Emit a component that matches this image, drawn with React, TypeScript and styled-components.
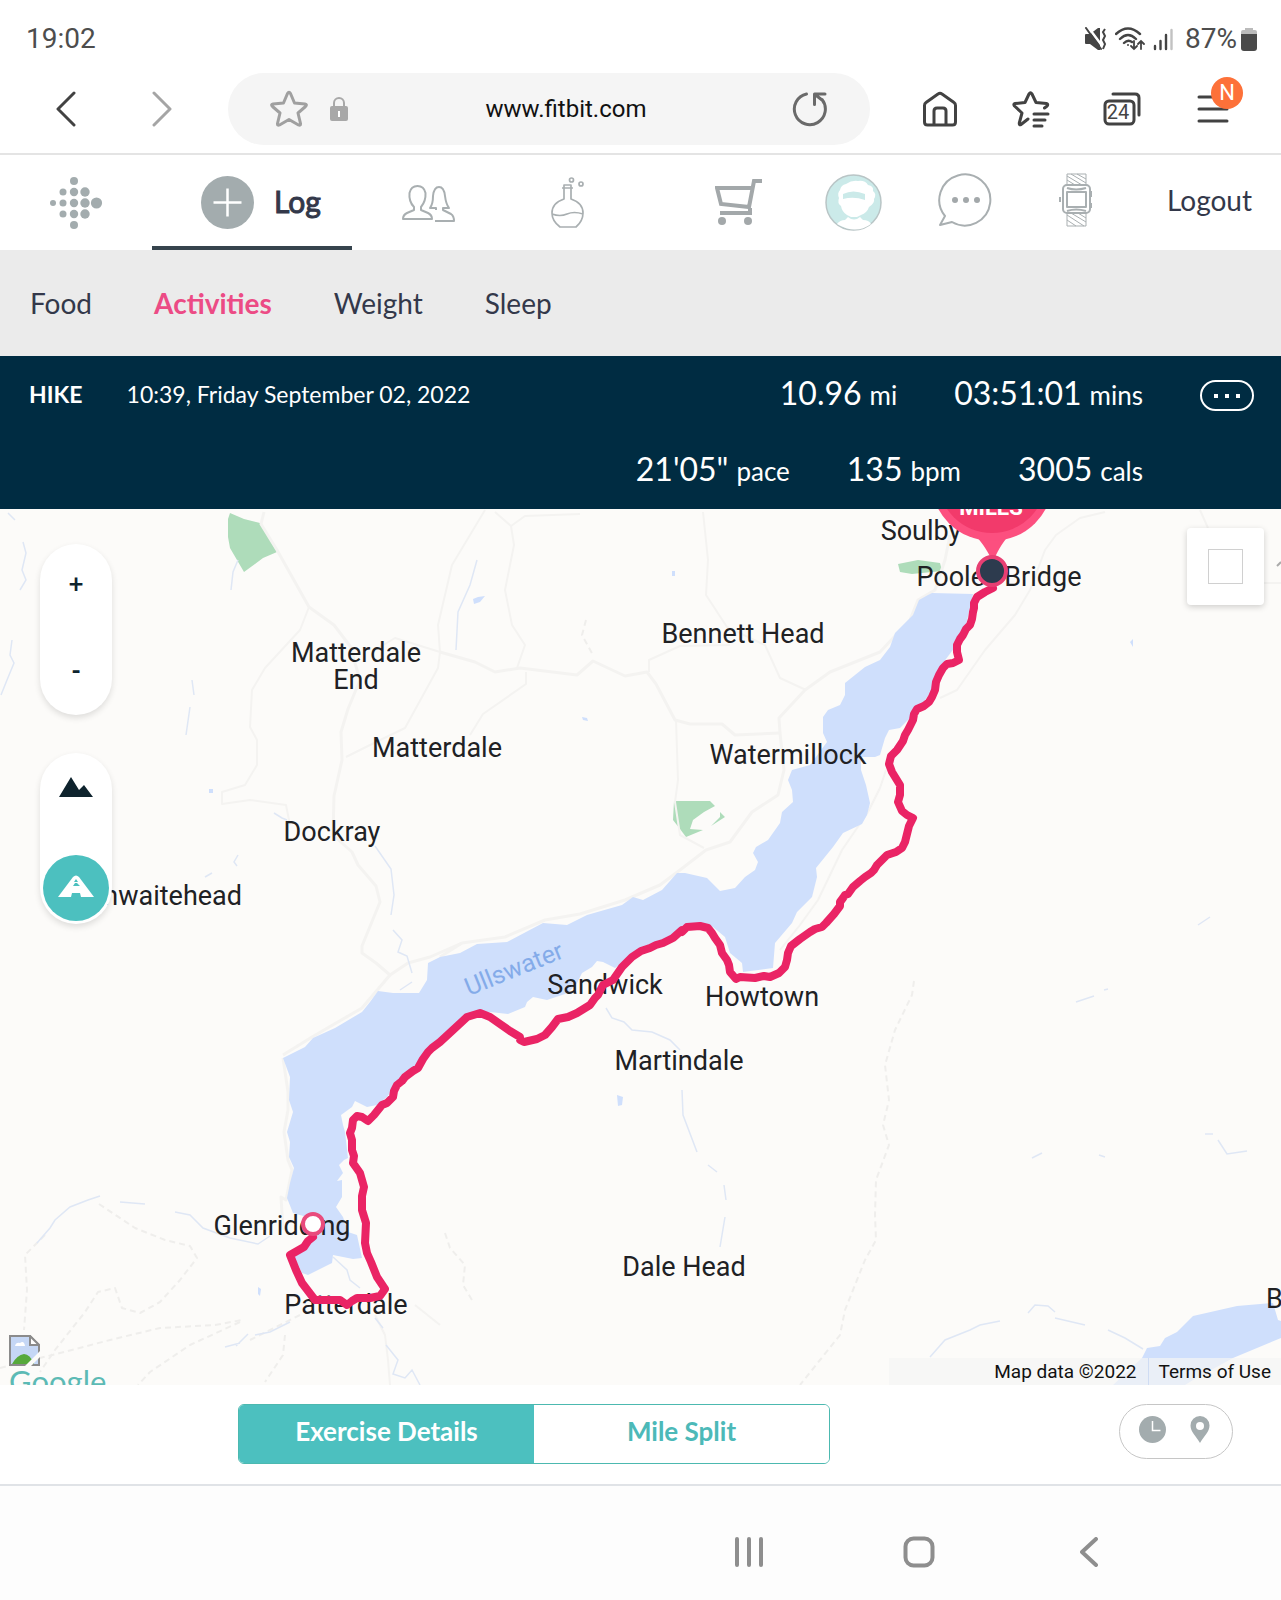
import React from "react";
import styled, { createGlobalStyle, css } from "styled-components";

const GlobalStyle = createGlobalStyle`
  *, *::before, *::after { box-sizing: border-box; }
  body { margin: 0; background: #fff; font-family: Lato, "Liberation Sans", sans-serif; color: #33384a; }
  button { border: 0; padding: 0; background: none; font: inherit; color: inherit; cursor: pointer; }
  a { color: inherit; text-decoration: none; }
  svg { display: block; flex: none; }
`;

const roboto = css`font-family: Roboto, "Liberation Sans", sans-serif;`;

const Page = styled.div`
  display: flex;
  flex-direction: column;
  min-height: 100vh;
  background: #fdfdfd;
`;

const StatusBar = styled.div`
  ${roboto}
  display: flex;
  align-items: center;
  justify-content: space-between;
  height: 65px;
  padding: 12px 24px 0 26px;
  font-size: 28px;
  line-height: 32px;
  color: #4d4d4d;
  background: #fff;
`;

const StatusIcons = styled.div`
  display: flex;
  align-items: center;
  gap: 8px;
`;

const Battery = styled.span`
  display: flex;
  align-items: center;
  gap: 4px;
  padding-left: 4px;
`;

const Toolbar = styled.div`
  display: flex;
  align-items: center;
  height: 90px;
  padding: 0 23px 0 18px;
  background: #fff;
  border-bottom: 2px solid #e4e4e4;
`;

const ToolButton = styled.button<{ $w: number }>`
  position: relative;
  display: flex;
  flex: none;
  align-items: center;
  justify-content: center;
  width: ${(p) => p.$w}px;
  height: 72px;
`;

const AddressBar = styled.div`
  display: flex;
  flex: 1;
  align-items: center;
  min-width: 0;
  height: 72px;
  margin: 0 24px 0 18px;
  padding: 0 42px;
  gap: 22px;
  border-radius: 36px;
  background: #f5f5f5;
`;

const Address = styled.input`
  ${roboto}
  flex: 1;
  min-width: 0;
  padding: 0 8px 0 0;
  border: 0;
  outline: 0;
  background: none;
  text-align: center;
  font-size: 24px;
  line-height: 32px;
  color: #111;
`;

const TabCount = styled.span`
  ${roboto}
  position: absolute;
  top: 29px;
  left: 26px;
  width: 32px;
  text-align: center;
  font-size: 20px;
  line-height: 20px;
  color: #444;
`;

const Badge = styled.span`
  ${roboto}
  position: absolute;
  top: 4px;
  left: 44px;
  width: 32px;
  height: 32px;
  border-radius: 50%;
  background: #fd7139;
  color: #fff;
  text-align: center;
  font-size: 22px;
  line-height: 32px;
`;

const MainNav = styled.nav`
  display: flex;
  height: 95px;
  background: #fff;
`;

const NavCell = styled.a<{ $w: number; $push?: boolean }>`
  display: flex;
  flex: none;
  align-items: center;
  justify-content: center;
  width: ${(p) => p.$w}px;
  height: 95px;
  ${(p) => p.$push && "margin-left: auto;"}
`;

const LogTab = styled(NavCell)`
  justify-content: flex-start;
  gap: 20px;
  padding: 4px 0 0 49px;
  border-bottom: 4px solid #36444d;
  font-size: 30px;
  line-height: 36px;
  color: #33384a;
  span { padding-bottom: 4px; -webkit-text-stroke: 1px #33384a; }
`;

const Logout = styled.a`
  flex: none;
  padding: 27px 29px 0 33px;
  font-size: 28px;
  line-height: 36px;
`;

const SubNav = styled.nav`
  display: flex;
  align-items: center;
  gap: 62px;
  height: 106px;
  padding: 0 30px;
  background: #ebebeb;
  font-size: 28px;
  line-height: 36px;
`;

const SubLink = styled.a<{ $active?: boolean }>`
  ${(p) => p.$active && "color: #ec4b85; font-weight: 700;"}
`;

const Summary = styled.header`
  display: flex;
  justify-content: space-between;
  padding: 0 27px 1px 29px;
  background: #002c42;
  color: #fff;
`;

const SummaryTitle = styled.div`
  display: flex;
  align-items: center;
  height: 76px;
  gap: 44px;
  font-size: 23px;
  line-height: 28px;
`;

const Kind = styled.h1`
  margin: 0;
  font-size: 23px;
  font-weight: 700;
`;

const SummaryEnd = styled.div`
  display: flex;
  gap: 57px;
`;

const StatRow = styled.div`
  display: flex;
  align-items: center;
  justify-content: flex-end;
  gap: 57px;
  height: 76px;
`;

const Stat = styled.span`
  display: flex;
  align-items: baseline;
  gap: 8px;
  font-size: 32px;
  line-height: 40px;
  small { font-size: 26px; }
`;

const MoreButton = styled.button`
  width: 54px;
  height: 31px;
  margin-top: 24px;
  border: 2px solid #fff;
  border-radius: 16px;
  display: flex;
  align-items: center;
  justify-content: center;
  gap: 7px;
  i { width: 4px; height: 4px; background: #fff; }
`;

const MapArea = styled.section`
  position: relative;
  overflow: hidden;
  background: #fcfbf9;
`;

const MapCanvas = styled.svg`
  width: 100%;
  height: auto;
  text { font-family: Roboto, "Liberation Sans", sans-serif; }
`;

const MapControls = styled.div`
  position: absolute;
  top: 35px;
  left: 40px;
  display: flex;
  flex-direction: column;
  gap: 38px;
`;

const Pill = styled.div`
  display: flex;
  flex-direction: column;
  align-items: center;
  justify-content: space-between;
  width: 72px;
  height: 171px;
  padding: 3px;
  border-radius: 36px;
  background: #fff;
  box-shadow: 0 3px 6px rgba(0, 0, 0, 0.12);
`;

const ZoomPill = styled(Pill)`
  padding: 0 3px 6px;
`;

const PillButton = styled.button<{ $active?: boolean }>`
  display: flex;
  align-items: center;
  justify-content: center;
  width: 66px;
  height: 66px;
  padding-bottom: 4px;
  border-radius: 50%;
  color: #0e232d;
  ${(p) => p.$active && "background: #4cc0bf;"}
`;

const ZoomButton = styled(PillButton)`
  height: 78px;
  padding: 0;
  font-size: 26px;
  font-weight: 700;
  line-height: 32px;
`;

const FullScreen = styled.label`
  position: absolute;
  top: 19px;
  right: 17px;
  display: flex;
  align-items: center;
  justify-content: center;
  width: 77px;
  height: 77px;
  border-radius: 4px;
  background: #fff;
  box-shadow: 0 2px 6px rgba(0, 0, 0, 0.18);
  input {
    appearance: none;
    width: 35px;
    height: 35px;
    margin: 0;
    border: 1px solid #d0d0d0;
    background: #fff;
  }
`;

const GoogleLink = styled.a`
  position: absolute;
  left: 9px;
  bottom: -11px;
  color: #5cbab5;
  font-size: 31px;
  line-height: 30px;
`;

const Attribution = styled.div`
  ${roboto}
  position: absolute;
  right: 0;
  bottom: 0;
  display: flex;
  height: 27px;
  font-size: 19px;
  line-height: 27px;
  color: #111;
  > * { background: rgba(245, 245, 245, 0.7); }
`;

const AttributionGap = styled.span`
  width: 94px;
`;

const MapData = styled.span`
  padding: 0 11px;
  border-right: 1px solid #cfdcf3;
`;

const Terms = styled.a`
  padding: 0 10px;
`;

const DetailBar = styled.div`
  display: flex;
  align-items: flex-start;
  justify-content: space-between;
  height: 101px;
  padding: 19px 48px 0 238px;
  border-bottom: 2px solid #e0e3e7;
  background: #fff;
`;

const Segments = styled.div`
  display: flex;
  width: 592px;
  height: 60px;
  overflow: hidden;
  border: 1px solid #4cb9b0;
  border-radius: 6px;
`;

const Segment = styled.button<{ $active?: boolean }>`
  flex: 1;
  padding-bottom: 6px;
  font-size: 26px;
  line-height: 32px;
  font-weight: 700;
  color: ${(p) => (p.$active ? "#fff" : "#4cb9b8")};
  background: ${(p) => (p.$active ? "#4cc0bf" : "#fff")};
`;

const AxisToggle = styled.div`
  display: flex;
  align-items: center;
  justify-content: center;
  width: 114px;
  height: 55px;
  padding-bottom: 4px;
  border: 1px solid #c6c6c6;
  border-radius: 28px;
  gap: 20px;
`;

const SystemNav = styled.div`
  display: flex;
  flex: 1;
  align-items: center;
  justify-content: flex-end;
  min-height: 114px;
  padding: 18px 107px 0 0;
`;

const places: [string, number, number][] = [
  ["Bennett Head", 743, 643],
  ["Matterdale", 356, 662],
  ["End", 356, 689],
  ["Matterdale", 437, 757],
  ["Dockray", 332, 841],
  ["Watermillock", 788, 764],
  ["Soulby", 921, 540],
  ["Pooley Bridge", 999, 586],
  ["Sandwick", 605, 994],
  ["Howtown", 762, 1006],
  ["Martindale", 679, 1070],
  ["Dale Head", 684, 1276],
  ["Glenridding", 282, 1235],
  ["Patterdale", 346, 1314],
];

const ullswater =
  "932,593 973,594 966,625 955,647 940,667 934,687 923,703 915,713 908,720 900,728 889,730 885,738 880,755 875,757 861,757 861,770 866,785 870,803 867,815 862,824 843,833 833,847 816,868 817,877 812,897 797,912 792,923 775,943 773,968 743,972 742,963 730,953 725,937 713,927 700,923 680,930 653,947 630,957 615,968 603,962 597,961 592,967 582,973 577,983 568,993 547,1000 533,997 527,1002 525,1007 508,1014 490,1012 480,1013 463,1020 440,1042 417,1067 397,1083 387,1097 377,1105 367,1107 355,1101 352,1107 341,1115 343,1125 345,1132 348,1158 344,1160 339,1165 343,1173 337,1181 342,1180 342,1197 336,1207 343,1217 348,1232 357,1235 362,1258 353,1259 333,1255 332,1263 308,1275 302,1273 293,1255 312,1237 307,1217 293,1213 287,1198 290,1183 294,1168 289,1157 290,1142 287,1132 293,1112 289,1100 290,1077 283,1058 305,1047 313,1038 335,1028 362,1012 370,1002 378,991 393,993 419,993 427,980 428,963 440,957 460,953 477,944 507,942 543,923 567,925 587,915 622,905 633,897 643,900 662,890 677,873 685,873 707,878 720,891 735,888 745,877 755,870 758,862 753,853 756,847 768,840 780,823 782,812 793,802 792,790 788,780 792,770 810,765 827,742 823,733 823,717 828,710 840,705 845,695 845,683 865,667 880,660 890,647 895,633 913,615 919,600 928,595";

const route =
  "993,588 985,592 977,597 974,603 974,608 973,612 972,619 970,625 966,629 963,635 960,639 957,645 957,652 959,660 953,663 947,664 943,668 939,675 936,682 935,690 932,697 929,702 924,706 917,709 914,714 913,720 908,730 905,735 903,741 897,750 891,756 889,764 892,772 900,785 900,795 898,802 902,811 907,815 913,818 909,826 907,834 905,842 902,848 896,852 887,855 877,865 874,870 871,873 865,877 860,881 853,887 848,894 845,895 843,898 840,902 840,906 834,914 826,923 822,927 815,929 810,932 800,939 791,946 788,953 787,960 785,967 779,973 770,977 764,976 755,978 740,977 736,979 730,972 729,965 727,960 722,953 720,945 715,938 712,933 708,928 700,926 687,927 682,932 682,930 673,938 663,943 656,945 650,948 641,951 632,957 622,967 613,980 603,985 598,995 595,998 590,1005 577,1013 568,1017 558,1019 552,1027 545,1035 537,1039 524,1042 520,1040 520,1037 510,1031 500,1024 490,1017 480,1013 467,1017 453,1030 440,1042 432,1048 428,1052 423,1059 418,1068 413,1071 405,1077 402,1081 397,1085 394,1091 393,1097 387,1103 382,1105 374,1115 368,1121 362,1117 357,1116 353,1120 352,1128 350,1133 352,1140 352,1150 354,1156 353,1163 360,1173 362,1180 364,1187 362,1196 362,1210 366,1223 365,1243 367,1253 371,1262 375,1272 377,1277 385,1289 380,1296 370,1298 357,1298 352,1301 347,1305 340,1300 315,1300 302,1283 296,1270 290,1255 304,1247 308,1241 313,1237";

const roads = [
  "M264 512L261 524 277 550 309 607 334 625 350 646 360 680 348 709 341 732 342 760 334 796 333 835 352 852 358 865 376 886 380 902 362 946 362 953 376 963 390 975 408 963 430 957 462 943 505 937 545 920 580 914 625 900 660 885 680 870 706 850 730 842 752 812 778 795 784 770 780 733 779 718 805 690 830 672 880 652 910 620 918 600 935 590 945 560 950 535",
  "M440 957L462 943M283 1055L312 1037 362 1008 390 975M283 1058L288 1092 288 1110 284 1132 288 1160 292 1170 286 1200 281 1197 283 1230",
  "M440 652L475 662 495 672 520 668 577 675 593 661 625 676 647 672 656 684 675 720 690 724 722 724 735 735 780 733",
];
const lanes = [
  "M440 652L438 668 405 728 370 745 346 757M485 510L452 565 438 625 440 652 395 638 375 650M495 512L511 526 514 545 505 590 512 625 525 645 517 668",
  "M511 526L525 516 580 514M703 512L708 560 706 595 727 627 765 645 780 678 806 690M649 672L649 660 680 646 730 645",
  "M526 672L526 684 483 714 470 735M676 720L678 780 675 802 680 835 704 848",
  "M309 607L300 630 265 668 252 690 250 727 257 740 257 765 245 785 222 792 222 804 250 800 286 805 290 825",
  "M1105 512L1080 518 1056 535 1045 550 1030 590 1015 615 985 650 957 690 940 698M1200 510L1208 528M1264 583L1281 583",
  "M886 770L880 788 868 812 842 850 818 900 800 925 780 950",
  "M375 1315L385 1335 388 1360 390 1385M415 1305L440 1325",
];
const trails = [
  "M99 1204L135 1228 165 1240 190 1246 197 1258 180 1280 160 1302 140 1313 122 1308 115 1288 98 1292 85 1312 55 1350 40 1372",
  "M45 1235L25 1255 27 1290 24 1330M0 1368L60 1353 110 1340 160 1328 215 1325 242 1320",
  "M240 1322L190 1345 150 1372 138 1385M285 1335L283 1355 265 1382M300 1315L250 1340",
  "M914 981L912 995 895 1030 885 1065 889 1100 883 1125 889 1145 876 1180 875 1215 876 1240 865 1260 845 1310 840 1335 800 1385",
  "M445 1233L450 1248 465 1265 463 1285 472 1300M586 620L582 635 593 655",
];
const streams =
  "M100 1196L88 1200 70 1207 55 1220 50 1228 37 1243M120 1202L145 1204M175 1212L190 1215 203 1228 230 1238 258 1244 270 1236M23 542L26 553 22 570 26 580 20 590M12 640L10 655 14 663 7 680 1 695M8 513L15 520M192 680L194 695M190 707L186 735M238 560L233 572 231 590M375 846L391 869 394 895 391 915M393 930L402 940 398 952 407 956 412 973M412 982L400 990M333 1257L347 1270 350 1280 360 1288M236 1346L248 1334M255 1335L270 1332 290 1322M225 1347L240 1343M375 1318L383 1328M386 1345L398 1360 393 1374 405 1378 412 1370 420 1385M477 560L470 585 458 612 456 650M606 1008L612 1018 624 1022 632 1030 652 1032 670 1040 680 1050M682 1090L683 1115 697 1152M708 1165L717 1172M724 1185L726 1200M725 1217L720 1247M1198 925L1210 917M1032 1158L1042 1153M1099 1155L1105 1157M1205 1134L1213 1134M1218 1140L1227 1154 1247 1151M1076 1002L1094 996M1104 990L1108 989M930 1357L945 1340 970 1330 980 1325 1000 1321M1028 1313L1035 1305 1048 1306 1055 1312M1055 1318L1085 1325M1108 1330L1125 1338 1143 1349M274 813L282 818 287 820M238 855L234 862 237 866M205 877L212 873";

function LakeMap() {
  return (
    <MapCanvas viewBox="0 509 1281 876" role="img" aria-label="Route map of the hike around Ullswater">
      <rect y="509" width="1281" height="876" fill="#fcfbf9" />
      <g fill="#aedcba">
        <path d="M230 513L244 519 260 523 277 552 263 558 244 572 230 548 228 537 228 519z" />
        <path d="M674 801H710L715 806 704 812 693 820 690 829 703 830 686 837 680 829 673 820z" />
        <path d="M720 812L725 817 711 826 720 817z" />
        <path d="M898 564L918 560 940 563 942 571 912 574 900 572z" />
      </g>
      <g fill="none" stroke="#f4f3f1" strokeLinejoin="round">
        {roads.map((d) => <path key={d} d={d} strokeWidth="3" />)}
        {lanes.map((d) => <path key={d} d={d} strokeWidth="2" />)}
        {trails.map((d) => <path key={d} d={d} strokeWidth="2" strokeDasharray="6 4" stroke="#efeeec" />)}
      </g>
      <path d={streams} fill="none" stroke="#dfe7f5" strokeWidth="1.5" />
      <g fill="#cfdffc">
        <polygon points={ullswater} />
        <path d="M1113 1385L1142 1358 1147 1348 1160 1346 1165 1338 1177 1332 1193 1316 1237 1306 1273 1303 1278 1320 1281 1321V1338L1233 1358 1193 1380 1185 1385z" />
        <path d="M473 599L478 597 485 596 480 602 474 604zM672 571h3v5h-3zM582 717l5 1 1 3-5-1zM617 1095l6 2-1 8-4 1zM1130 642l3-3v8zM258 1287l3 2-1 7-2-2zM209 789h4v4h-4z" />
      </g>
      <g fontSize="27" textAnchor="middle" fill="#202124">
        {places.map(([name, x, y]) => <text key={name + x} x={x} y={y}>{name}</text>)}
        <text x="242" y="905" textAnchor="end">Thwaitehead</text>
        <text x="1266" y="1308" textAnchor="start">B</text>
      </g>
      <text x="469" y="996" fontSize="25" fill="#84abe9" transform="rotate(-22 469 996)">Ullswater</text>
      <polyline points={route} fill="none" stroke="#ea2465" strokeWidth="8" strokeLinejoin="round" strokeLinecap="round" />
      <circle cx="313" cy="1224" r="10" fill="#fff" stroke="#e94b7d" strokeWidth="4" />
      <path d="M975 535H1009C1001 545 997 552 993 562C988 552 984 545 975 535z" fill="#fc4f7f" />
      <circle cx="992" cy="480" r="61" fill="#fc4f7f" />
      <circle cx="992" cy="479" r="54" fill="#f23a6b" />
      <text x="991" y="515" fontSize="22" fontWeight="700" textAnchor="middle" fill="#fff">MILES</text>
      <circle cx="992" cy="571" r="14" fill="#2d3b4e" stroke="#e83f73" strokeWidth="4" />
      <path d="M1277 566L1281 562" stroke="#aaa" strokeWidth="2" />
    </MapCanvas>
  );
}

const stroke = { fill: "none", stroke: "#424242", strokeWidth: 3, strokeLinecap: "round", strokeLinejoin: "round" } as const;
const pale = { fill: "none", stroke: "#a9afb1", strokeWidth: 2, strokeLinejoin: "round" } as const;

const logoDots: [number, number, number][] = [
  [3, 26, 3], [13, 15, 3.5], [13, 26, 3.5], [13, 37, 3.5],
  [24, 4, 4], [24, 15, 4.2], [24, 26, 4.2], [24, 37, 4.2], [24, 48, 4],
  [35, 15, 4.7], [35, 26, 4.7], [35, 37, 4.7], [46.5, 26, 5.6],
];

export default function App() {
  return (
    <Page>
      <GlobalStyle />
      <StatusBar>
        <span>19:02</span>
        <StatusIcons>
          <svg width="23" height="24" viewBox="0 0 23 24">
            <path d="M1 8q0-1 1-1h4l8-6h2v22h-2l-8-6H2q-1 0-1-1z" fill="#444" />
            <path d="M4 0l15 20" stroke="#fff" strokeWidth="2.500" />
            <path d="M2 1l15 21" stroke="#444" strokeWidth="2" strokeLinecap="round" />
            <path d="M21 2l-2 3 2 4-2 4 2 4-2 5" fill="none" stroke="#444" strokeWidth="2" />
          </svg>
          <svg width="30" height="24" viewBox="0 0 30 24" fill="none" stroke="#444" strokeWidth="2.4" strokeLinecap="round">
            <path d="M1 7Q13-4 25 7M5 12Q13 4 21 12M9 16Q13 12 17 15" />
            <circle cx="13" cy="18" r="1" fill="#444" stroke="none" />
            <path d="M19 14v8m-3-3l3 3 3-3M26 22v-8m-3 3l3-3 3 3" strokeWidth="1.8" />
          </svg>
          <svg width="20" height="24" viewBox="0 0 20 24" stroke="#444" strokeWidth="2.4" strokeLinecap="round">
            <path d="M2 19v3M7.500 14v8M13 8v14" />
            <path d="M18.500 3v19" stroke="#c2c2c2" />
          </svg>
          <Battery>
            87%
            <svg width="16" height="24" viewBox="0 0 16 24">
              <path d="M4 1h8v2h2q2 0 2 2v3H0V5q0-2 2-2h2z" fill="#bbb" />
              <path d="M0 7h16v14q0 3-3 3H3q-3 0-3-3z" fill="#4a4a4a" />
            </svg>
          </Battery>
        </StatusIcons>
      </StatusBar>

      <Toolbar>
        <ToolButton $w={96} aria-label="Back">
          <svg width="20" height="36" viewBox="0 0 20 36" {...stroke}><path d="M18 2L2 18l16 16" /></svg>
        </ToolButton>
        <ToolButton $w={96} aria-label="Forward">
          <svg width="20" height="36" viewBox="0 0 20 36" {...stroke} stroke="#a5a5a5"><path d="M2 2l16 16L2 34" /></svg>
        </ToolButton>
        <AddressBar>
          <svg width="38" height="38" viewBox="0 0 38 38" {...stroke} stroke="#a0a0a0">
            <path d="M17.500 3.500q1.500-2.500 3 0l4 9.500 10.500 1q2.500.5.5 2.500L28 23l2.500 10.500q.2 2.500-2 1.500L19 29.500 9.500 35q-2.200 1-2-1.500L10 23 2.500 16.500q-2-2 .5-2.500l10.500-1z" />
          </svg>
          <svg width="18" height="24" viewBox="0 0 18 24">
            <path d="M4 10V6a5 5 0 0 1 10 0v4" fill="none" stroke="#a8a8a8" strokeWidth="2" />
            <rect y="9" width="18" height="15" rx="2" fill="#a8a8a8" />
            <path d="M8 14h2v6H8z" fill="#fff" />
          </svg>
          <Address aria-label="Address" defaultValue="www.fitbit.com" />
          <svg width="36" height="36" viewBox="0 0 36 36" {...stroke} stroke="#6a6a6a">
            <path d="M14.500 3A15.500 15.500 0 1 0 30 8.500M33 3H22.500v10.500M23 3.500L30 9" />
          </svg>
        </AddressBar>
        <ToolButton $w={91} aria-label="Home">
          <svg width="36" height="36" viewBox="0 0 36 36" {...stroke}>
            <path d="M2.500 14.500q0-2 1.500-3L16 3q2-1.500 4 0l12 8.500q1.500 1 1.500 3V31q0 3-3 3h-25q-3 0-3-3zM12 33V20q0-3 3-3h6q3 0 3 3v13" />
          </svg>
        </ToolButton>
        <ToolButton $w={91} aria-label="Bookmarks">
          <svg width="38" height="38" viewBox="0 0 38 38" {...stroke}>
            <path d="M16 29l-7 5.500q-2 .8-1.700-1.500L10 23 2.500 16q-1.500-2 .5-2.500l10-1L17 4q1.500-2.500 3 0l4 8.500 10.500 1q2.500.8 0 3l-2 1.500M22 24h14M22 30h11M22 36h8" />
          </svg>
        </ToolButton>
        <ToolButton $w={91} aria-label="Tabs">
          <svg width="38" height="34" viewBox="0 0 38 34" {...stroke}>
            <rect x="2" y="9" width="29" height="23" rx="4" />
            <path d="M10 2h22q4 0 4 4v17" />
          </svg>
          <TabCount>24</TabCount>
        </ToolButton>
        <ToolButton $w={91} aria-label="Menu">
          <svg width="32" height="28" viewBox="0 0 32 28" {...stroke}><path d="M2 2h28M2 14h28M2 26h28" /></svg>
          <Badge>N</Badge>
        </ToolButton>
      </Toolbar>

      <MainNav aria-label="Main">
        <NavCell $w={152} href="#dashboard" aria-label="Dashboard">
          <svg width="53" height="52" viewBox="0 0 53 52" fill="#a3acae">
            {logoDots.map(([x, y, r]) => <circle key={`${x}-${y}`} cx={x} cy={y} r={r} />)}
          </svg>
        </NavCell>
        <LogTab $w={200} href="#log">
          <svg width="53" height="53" viewBox="0 0 53 53">
            <circle cx="26.500" cy="26.500" r="26.500" fill="#a3acae" />
            <path d="M26.500 12.500v28M12.500 26.500h28" stroke="#fff" strokeWidth="2.500" />
          </svg>
          <span>Log</span>
        </LogTab>
        <NavCell $w={152} href="#community" aria-label="Community">
          <svg width="53" height="38" viewBox="0 0 53 38" {...pale}>
            <path d="M12 23C8 19 7 14 7.500 9Q9 2 15.500 2T23.500 9Q24 17 19 23v3l7 3q4 2 4 6H1q0-4 4-6l7-3z" />
            <path d="M34 26v-2h-6q3-4 3-12 1-9 6-9t6 9q1 8 4 12h-6v2l8 4q3 2 3 7H33" />
          </svg>
        </NavCell>
        <NavCell $w={128} href="#labs" aria-label="Labs">
          <svg width="34" height="52" viewBox="0 0 34 52" {...pale} strokeWidth="1.700">
            <path d="M11 11h11M13 8h7v14q12 4 12 14 0 8-7 14H9Q1 44 1 36q0-10 12-14zM1 37q8 3 15 0t16 0" />
            <circle cx="20.500" cy="3" r="2" /><circle cx="30" cy="7" r="2" />
          </svg>
        </NavCell>
        <NavCell $w={118} $push href="#cart" aria-label="Shopping cart">
          <svg width="48" height="48" viewBox="0 0 48 48" fill="none" stroke="#a3a8aa" strokeWidth="4">
            <path d="M47 2h-8l-5 26L6 25 2 9h34M5 34h30v-5" />
            <circle cx="7" cy="42" r="4" fill="#a3a8aa" stroke="none" /><circle cx="33" cy="42" r="4" fill="#a3a8aa" stroke="none" />
          </svg>
        </NavCell>
        <NavCell $w={112} href="#profile" aria-label="Profile">
          <svg width="57" height="57" viewBox="0 0 57 57">
            <circle cx="28.500" cy="28.500" r="27.500" fill="#cbeae9" stroke="#b9c5c6" strokeWidth="1.500" />
            <path d="M16 32q-4-3-2-8-2-5 1-8 1-5 6-6 6-4 12-3 7-1 10 4 6 1 5 6 4 3 1 8 1 4-5 8-2 6-8 8l-4 2h-6l-4-2q-5-3-6-9z" fill="#fff" />
            <path d="M18 20q10-5 22 0v6q-11-4-22-1z" fill="#cbeae9" />
            <path d="M12 50q3-4 8-4l3-3q6 5 12 0l3 3q6 0 8 4-15 11-34 0z" fill="#fff" />
          </svg>
        </NavCell>
        <NavCell $w={112} href="#messages" aria-label="Messages">
          <svg width="55" height="60" viewBox="0 0 55 60" {...pale}>
            <path d="M7 43A25.500 25.500 0 1 1 14 49L2 52z" />
            <g fill="#a3a8aa" stroke="none"><circle cx="17" cy="27" r="3" /><circle cx="28" cy="27" r="3" /><circle cx="39" cy="27" r="3" /></g>
          </svg>
        </NavCell>
        <NavCell $w={112} href="#device" aria-label="Device">
          <svg width="38" height="60" viewBox="0 0 38 60" {...pale} strokeWidth="1">
            <path d="M8 1h19v11H8zM8 40h19v13H8zM8 3l15 9M12 1l15 9M18 1l9 5M8 7l8 5M8 42l17 11M12 40l15 9M19 40l8 5M8 47l9 6" />
            <rect x="4" y="12" width="27" height="28" rx="4" strokeWidth="2" fill="#fff" />
            <rect x="8" y="19" width="19" height="15" strokeWidth="2" />
            <path d="M8 15q9 3 19 0M8 38q9-3 19 0M1 24v5M32 18v6M32 30v5" strokeWidth="2" />
          </svg>
        </NavCell>
        <Logout href="#logout">Logout</Logout>
      </MainNav>

      <SubNav aria-label="Log">
        <SubLink href="#food">Food</SubLink>
        <SubLink $active href="#activities" aria-current="page">Activities</SubLink>
        <SubLink href="#weight">Weight</SubLink>
        <SubLink href="#sleep">Sleep</SubLink>
      </SubNav>

      <Summary>
        <SummaryTitle>
          <Kind>HIKE</Kind>
          <time dateTime="2022-09-02T10:39">10:39, Friday September 02, 2022</time>
        </SummaryTitle>
        <SummaryEnd>
          <div>
            <StatRow>
              <Stat>10.96 <small>mi</small></Stat>
              <Stat>03:51:01 <small>mins</small></Stat>
            </StatRow>
            <StatRow>
              <Stat>21'05" <small>pace</small></Stat>
              <Stat>135 <small>bpm</small></Stat>
              <Stat>3005 <small>cals</small></Stat>
            </StatRow>
          </div>
          <MoreButton aria-label="More options"><i /><i /><i /></MoreButton>
        </SummaryEnd>
      </Summary>

      <MapArea>
        <LakeMap />
        <MapControls>
          <ZoomPill>
            <ZoomButton aria-label="Zoom in">+</ZoomButton>
            <ZoomButton aria-label="Zoom out">-</ZoomButton>
          </ZoomPill>
          <Pill>
            <PillButton aria-label="Terrain">
              <svg width="34" height="20" viewBox="0 0 34 20" fill="#0e232d"><path d="M0 20L12 0l8 13 5-5 9 12z" /></svg>
            </PillButton>
            <PillButton $active aria-label="Road map">
              <svg width="36" height="22" viewBox="0 0 36 22">
                <path d="M0 22L15 2q3-3 6 0l15 20H23l-1-4h-8l-1 4z" fill="#fff" />
                <path d="M16 7l2-3 2 3zM15 11l2-3h2l3 3z" fill="#4cc0bf" />
              </svg>
            </PillButton>
          </Pill>
        </MapControls>
        <FullScreen><input type="checkbox" aria-label="Full screen" /></FullScreen>
        <GoogleLink href="#google">
          <svg width="31" height="31" viewBox="0 0 31 31">
            <path d="M1 1h20l9 9v20H1z" fill="#c5d7f5" stroke="#8b8b8b" strokeWidth="2" />
            <path d="M21 1v9h9z" fill="#fff" stroke="#8b8b8b" strokeWidth="2" />
            <path d="M6 11q1-4 5-3 4-3 5 3z" fill="#fff" />
            <path d="M3 29q5-9 12-10 6 0 10 10z" fill="#56a93b" />
            <path d="M16 31L31 16v6l-9 9z" fill="#fcfbf9" />
          </svg>
          Google
        </GoogleLink>
        <Attribution>
          <AttributionGap />
          <MapData>Map data ©2022</MapData>
          <Terms href="#terms">Terms of Use</Terms>
        </Attribution>
      </MapArea>

      <DetailBar>
        <Segments>
          <Segment $active aria-pressed="true">Exercise Details</Segment>
          <Segment aria-pressed="false">Mile Split</Segment>
        </Segments>
        <AxisToggle>
          <button aria-label="By time">
            <svg width="27" height="27" viewBox="0 0 27 27"><circle cx="13.500" cy="13.500" r="13.500" fill="#a3acae" /><path d="M13.500 5v9.500h8" fill="none" stroke="#fff" strokeWidth="1.500" /></svg>
          </button>
          <button aria-label="By distance">
            <svg width="28" height="27" viewBox="0 0 28 27"><path d="M14 0a9.500 9.500 0 0 1 9.500 9.500C23.500 16 18 20 14 27 10 20 4.500 16 4.500 9.500A9.500 9.500 0 0 1 14 0z" fill="#a3acae" /><circle cx="14" cy="10" r="4" fill="#fff" /></svg>
          </button>
        </AxisToggle>
      </DetailBar>

      <SystemNav>
        <ToolButton $w={170} aria-label="Recent apps">
          <svg width="28" height="30" viewBox="0 0 28 30" {...stroke} stroke="#8e8e8e" strokeWidth="4"><path d="M2 2v26M14 2v26M26 2v26" /></svg>
        </ToolButton>
        <ToolButton $w={170} aria-label="Home screen">
          <svg width="32" height="32" viewBox="0 0 32 32" {...stroke} stroke="#8e8e8e" strokeWidth="4"><rect x="2.500" y="2.500" width="27" height="27" rx="8" /></svg>
        </ToolButton>
        <ToolButton $w={170} aria-label="Go back">
          <svg width="18" height="30" viewBox="0 0 18 30" {...stroke} stroke="#8e8e8e" strokeWidth="4"><path d="M16 2L2 15l14 13" /></svg>
        </ToolButton>
      </SystemNav>
    </Page>
  );
}
